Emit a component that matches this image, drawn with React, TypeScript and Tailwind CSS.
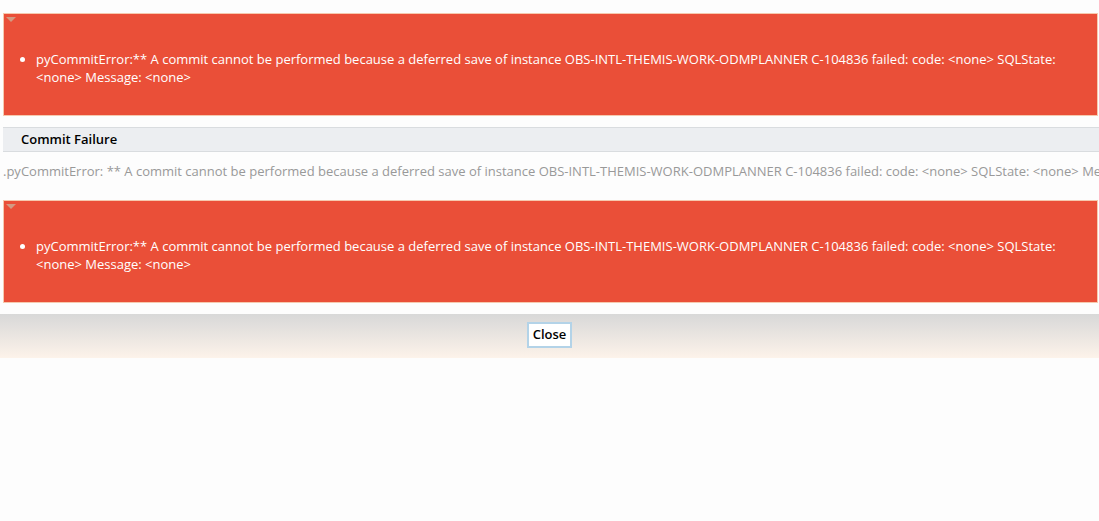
const MSG =
  'A commit cannot be performed because a deferred save of instance OBS-INTL-THEMIS-WORK-ODMPLANNER C-104836 failed: code: <none> SQLState: <none> Message: <none>';

const ErrorBox = () => (
  <div className="relative ml-[3px] mr-px h-[103px] border border-[#f6c9ae] bg-[#ea4f38]">
    <span className="absolute left-[2px] top-[3px] h-0 w-0 border-x-[5px] border-t-[5px] border-x-transparent border-t-[#d39a82]" />
    <ul className="list-disc pl-[32px] pr-[20px] pt-[36px] text-[13px] leading-[18px] text-white">
      <li>pyCommitError:** {MSG}</li>
    </ul>
  </div>
);

export default function App() {
  return (
    <div
      className="min-h-[521px] w-[1099px] overflow-hidden bg-[#fdfdfd] pt-[13px]"
      style={{ fontFamily: '"Open Sans", "Noto Sans", sans-serif' }}
    >
      <ErrorBox />

      <div className="mt-[11px] ml-[3px] flex h-[25px] items-center border-y border-[#d9dcdf] bg-[#eceef1] pl-[18px] text-[13px] font-semibold text-black">
        Commit Failure
      </div>

      <div className="mt-[10px] mb-[20px] whitespace-nowrap pl-[3px] text-[13px] leading-[18px] text-[#999999]">
        .pyCommitError: ** {MSG}
      </div>

      <ErrorBox />

      <div className="mt-[11px] flex h-[44px] justify-center bg-gradient-to-b from-[#d8d8d8] to-[#fdf3ea] pt-[8px]">
        <button className="h-[26px] border-2 border-[#b3d3e8] bg-white px-[4px] pb-px text-[13px] font-semibold leading-none text-black">
          Close
        </button>
      </div>
    </div>
  );
}
